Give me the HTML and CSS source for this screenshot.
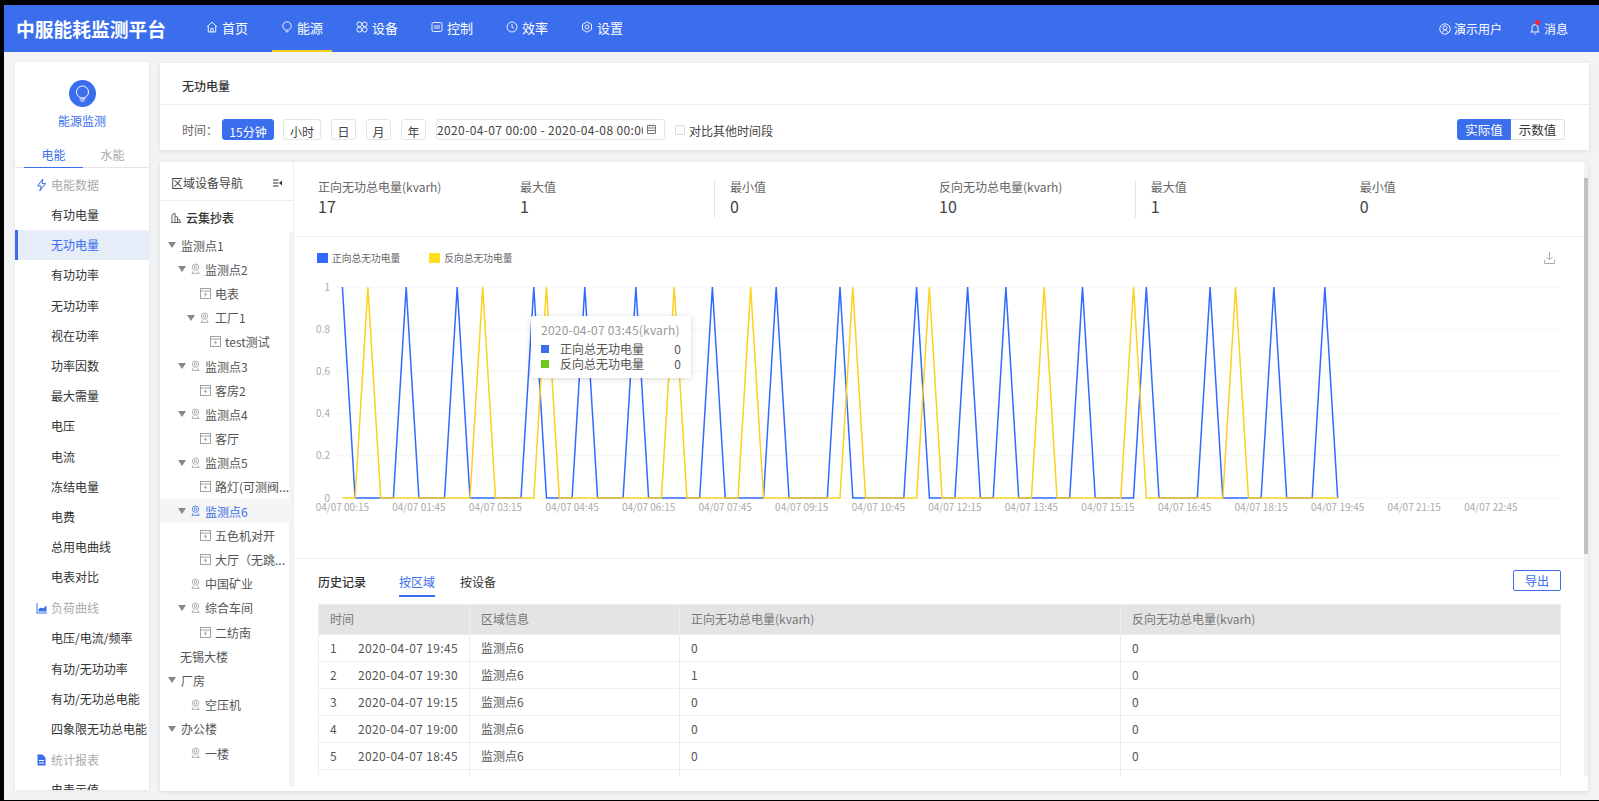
FILE: index.html
```html
<!DOCTYPE html>
<html lang="zh-CN">

<head>
  <meta charset="UTF-8">
  <title>中服能耗监测平台</title>
  <link rel="stylesheet" href="styles.css">
</head>

<body>
  <svg class="defs" xmlns="http://www.w3.org/2000/svg">
    <symbol id="i-home" viewBox="0 0 12 12"><path d="M1 5.8 6 1.200l5 4.600M2.300 5v6h7.400V5M4.800 11V7.600h2.400V11" /></symbol>
    <symbol id="i-bulb" viewBox="0 0 12 12"><circle cx="6" cy="5" r="4.200" /><path d="M4.400 10.800h3.200" /></symbol>
    <symbol id="i-device" viewBox="0 0 12 12"><circle cx="3.300" cy="3.300" r="2.400" /><circle cx="8.700" cy="3.300" r="2.400" /><circle cx="3.300" cy="8.700" r="2.400" /><circle cx="8.700" cy="8.700" r="2.400" /></symbol>
    <symbol id="i-control" viewBox="0 0 12 12"><rect x="1" y="1.500" width="10" height="9" rx="1.500" /><path d="M4 4v4M6 4v4M8 4v4" /></symbol>
    <symbol id="i-clock" viewBox="0 0 12 12"><circle cx="6" cy="6" r="5" /><path d="M6 3v3.200l2 1.200" /></symbol>
    <symbol id="i-gear" viewBox="0 0 12 12"><path d="M6 .8l4.500 2.600v5.200L6 11.200 1.500 8.600V3.400z" /><circle cx="6" cy="6" r="2" /></symbol>
    <symbol id="i-user" viewBox="0 0 12 12"><circle cx="6" cy="6" r="5.200" /><circle cx="6" cy="4.700" r="2" /><path d="M2.800 9.800c.7-1.700 1.900-2.600 3.200-2.600s2.500.9 3.200 2.600" /></symbol>
    <symbol id="i-bell" viewBox="0 0 12 12"><path d="M3 9V4.600a3 3 0 0 1 6 0V9M1.600 9h8.800M5.200 11h1.600" /></symbol>
    <symbol id="i-pin" viewBox="0 0 10 12"><circle cx="5" cy="4" r="3.500" /><circle cx="5" cy="4" r="1.400" /><path d="M2.400 8.400 1 10.800h8L7.600 8.400" /></symbol>
    <symbol id="i-meter" viewBox="0 0 11 11"><rect x=".5" y=".5" width="10" height="10" /><path d="M.5 3h10M6 4.400 4.400 6.400h2.200L5 8.400" /></symbol>
  </svg>

  <div class="app">
    <header class="topbar">
      <div class="logo">中服能耗监测平台</div>
      <nav class="nav">
        <a class="nav-item"><svg class="ico"><use href="#i-home" /></svg>首页</a>
        <a class="nav-item active"><svg class="ico"><use href="#i-bulb" /></svg>能源</a>
        <a class="nav-item"><svg class="ico"><use href="#i-device" /></svg>设备</a>
        <a class="nav-item"><svg class="ico"><use href="#i-control" /></svg>控制</a>
        <a class="nav-item"><svg class="ico"><use href="#i-clock" /></svg>效率</a>
        <a class="nav-item"><svg class="ico"><use href="#i-gear" /></svg>设置</a>
      </nav>
      <div class="top-right">
        <a class="top-link"><svg class="ico"><use href="#i-user" /></svg>演示用户</a>
        <a class="top-link bell"><svg class="ico"><use href="#i-bell" /></svg><i class="dot"></i>消息</a>
      </div>
    </header>

    <div class="content">
      <aside class="sidebar">
        <div class="side-head">
          <div class="side-circle">
            <svg width="15" height="17" viewBox="0 0 15 17" fill="none" stroke="#fff" stroke-width="1">
              <circle cx="7.500" cy="7" r="6" />
              <path d="M4.500 14h6M5.500 16h4" />
            </svg>
          </div>
          <div class="side-title">能源监测</div>
        </div>
        <div class="side-tabs">
          <span class="side-tab active">电能</span>
          <span class="side-tab">水能</span>
        </div>
        <div class="menu">
          <div class="menu-group">
            <svg class="group-ico" viewBox="0 0 11 14" fill="none" stroke="#3a6eed" stroke-width="1"><path d="M6.800 1 1.600 8h3.600L3.800 13 9.600 5.600H6z" /></svg>电能数据
          </div>
          <div class="menu-item">有功电量</div>
          <div class="menu-item active">无功电量</div>
          <div class="menu-item">有功功率</div>
          <div class="menu-item">无功功率</div>
          <div class="menu-item">视在功率</div>
          <div class="menu-item">功率因数</div>
          <div class="menu-item">最大需量</div>
          <div class="menu-item">电压</div>
          <div class="menu-item">电流</div>
          <div class="menu-item">冻结电量</div>
          <div class="menu-item">电费</div>
          <div class="menu-item">总用电曲线</div>
          <div class="menu-item">电表对比</div>
          <div class="menu-group">
            <svg class="group-ico" viewBox="0 0 11 14" fill="#3a6eed"><path d="M.5 2h1v9.500h9.500v1H.5z" /><path d="M2.500 10.500V8l2.500-1.500 2 1L10.500 4.500v6z" /></svg>负荷曲线
          </div>
          <div class="menu-item">电压/电流/频率</div>
          <div class="menu-item">有功/无功功率</div>
          <div class="menu-item">有功/无功总电能</div>
          <div class="menu-item">四象限无功总电能</div>
          <div class="menu-group">
            <svg class="group-ico" viewBox="0 0 11 14" fill="#3a6eed"><path d="M1.500 1.500h5l3 3v8h-8zM3 7v1h5V7zm0 2.500v1h5v-1z" fill-rule="evenodd" /></svg>统计报表
          </div>
          <div class="menu-item">电表示值</div>
        </div>
      </aside>

      <main class="main">
        <section class="card filter-card">
          <div class="filter-title">无功电量</div>
          <div class="filter-row">
            <span class="filter-label">时间：</span>
            <span class="btn primary w52">15分钟</span>
            <span class="btn w38">小时</span>
            <span class="btn w25">日</span>
            <span class="btn w25">月</span>
            <span class="btn w25">年</span>
            <div class="date-input">
              <span class="date-text">2020-04-07 00:00 - 2020-04-08 00:00</span>
              <svg class="date-ico" viewBox="0 0 11 11" fill="none" stroke="#777" stroke-width="1"><path d="M1.500 1.500h8v8h-8zM4 .5v2M7 .5v2M1.500 4h8M1.500 6.500h8" /></svg>
            </div>
            <label class="compare"><i class="check"></i>对比其他时间段</label>
            <div class="toggle">
              <span class="toggle-item on">实际值</span>
              <span class="toggle-item">示数值</span>
            </div>
          </div>
        </section>

        <section class="card lower-card">
          <div class="tree-panel">
            <div class="tree-head">
              <span>区域设备导航</span>
              <svg width="9" height="8" viewBox="0 0 9 8" fill="none" stroke="#333" stroke-width="1"><path d="M0 1h5.500M0 4h5.500M0 7h5.500" /><path d="M9 1.500v5L6 4z" fill="#333" stroke="none" /></svg>
            </div>
            <div class="tree-root">
              <svg width="10" height="11" viewBox="0 0 10 11" fill="none" stroke="#666" stroke-width="1"><path d="M1 10.500V3l3-2v9.500M4 4l2.500 1v5.500M6.500 7 9 8v2.500M0 10.500h10" /></svg>
              云集抄表
            </div>
            <div class="tree">
              <div class="tree-row lv0"><i class="arrow"></i>监测点1</div>
              <div class="tree-row lv1"><i class="arrow"></i><svg class="node"><use href="#i-pin" /></svg>监测点2</div>
              <div class="tree-row lv2"><svg class="node meter"><use href="#i-meter" /></svg>电表</div>
              <div class="tree-row lv2-a"><i class="arrow"></i><svg class="node"><use href="#i-pin" /></svg>工厂1</div>
              <div class="tree-row lv3"><svg class="node meter"><use href="#i-meter" /></svg>test测试</div>
              <div class="tree-row lv1"><i class="arrow"></i><svg class="node"><use href="#i-pin" /></svg>监测点3</div>
              <div class="tree-row lv2"><svg class="node meter"><use href="#i-meter" /></svg>客房2</div>
              <div class="tree-row lv1"><i class="arrow"></i><svg class="node"><use href="#i-pin" /></svg>监测点4</div>
              <div class="tree-row lv2"><svg class="node meter"><use href="#i-meter" /></svg>客厅</div>
              <div class="tree-row lv1"><i class="arrow"></i><svg class="node"><use href="#i-pin" /></svg>监测点5</div>
              <div class="tree-row lv2"><svg class="node meter"><use href="#i-meter" /></svg>路灯(可测阀...</div>
              <div class="tree-row lv1 current"><i class="arrow"></i><svg class="node"><use href="#i-pin" /></svg>监测点6</div>
              <div class="tree-row lv2"><svg class="node meter"><use href="#i-meter" /></svg>五色机对开</div>
              <div class="tree-row lv2"><svg class="node meter"><use href="#i-meter" /></svg>大厅（无跳...</div>
              <div class="tree-row lv1-leaf"><svg class="node"><use href="#i-pin" /></svg>中国矿业</div>
              <div class="tree-row lv1"><i class="arrow"></i><svg class="node"><use href="#i-pin" /></svg>综合车间</div>
              <div class="tree-row lv2"><svg class="node meter"><use href="#i-meter" /></svg>二纺南</div>
              <div class="tree-row lv0-leaf">无锡大楼</div>
              <div class="tree-row lv0"><i class="arrow"></i>厂房</div>
              <div class="tree-row lv1-leaf"><svg class="node"><use href="#i-pin" /></svg>空压机</div>
              <div class="tree-row lv0"><i class="arrow"></i>办公楼</div>
              <div class="tree-row lv1-leaf"><svg class="node"><use href="#i-pin" /></svg>一楼</div>
            </div>
          </div>

          <div class="right-wrap">
            <div class="panel">
              <div class="stats">
                <div class="stat"><p>正向无功总电量(kvarh)</p><b>17</b></div>
                <div class="stat"><p>最大值</p><b>1</b></div>
                <div class="stat sep"><p>最小值</p><b>0</b></div>
                <div class="stat"><p>反向无功总电量(kvarh)</p><b>10</b></div>
                <div class="stat sep"><p>最大值</p><b>1</b></div>
                <div class="stat"><p>最小值</p><b>0</b></div>
              </div>

              <div class="chart">
                <div class="legend-row">
                  <div class="legend">
                    <span class="legend-item"><i class="swatch blue"></i>正向总无功电量</span>
                    <span class="legend-item"><i class="swatch yellow"></i>反向总无功电量</span>
                  </div>
                  <svg width="11" height="12" viewBox="0 0 11 12" fill="none" stroke="#aaa" stroke-width="1"><path d="M5.500 0v8M2.500 5l3 3 3-3M.5 8v3.500h10V8" /></svg>
                </div>
                <svg id="plot" class="plot" viewBox="294 270 1290 288" width="1290" height="288"></svg>
                <div class="tooltip">
                  <div class="tip-title">2020-04-07 03:45(kvarh)</div>
                  <div class="tip-row"><i class="tip-dot tip-blue"></i><span>正向总无功电量</span><em>0</em></div>
                  <div class="tip-row"><i class="tip-dot green"></i><span>反向总无功电量</span><em>0</em></div>
                </div>
              </div>

              <div class="history">
                <div class="history-head">
                  <span class="history-title">历史记录</span>
                  <span class="history-tab active">按区域</span>
                  <span class="history-tab">按设备</span>
                  <span class="export">导出</span>
                </div>
                <table class="records">
                  <thead>
                    <tr><th>时间</th><th>区域信息</th><th>正向无功总电量(kvarh)</th><th>反向无功总电量(kvarh)</th></tr>
                  </thead>
                  <tbody>
                    <tr><td><span class="idx">1</span><span class="when">2020-04-07 19:45</span></td><td>监测点6</td><td>0</td><td>0</td></tr>
                    <tr><td><span class="idx">2</span><span class="when">2020-04-07 19:30</span></td><td>监测点6</td><td>1</td><td>0</td></tr>
                    <tr><td><span class="idx">3</span><span class="when">2020-04-07 19:15</span></td><td>监测点6</td><td>0</td><td>0</td></tr>
                    <tr><td><span class="idx">4</span><span class="when">2020-04-07 19:00</span></td><td>监测点6</td><td>0</td><td>0</td></tr>
                    <tr><td><span class="idx">5</span><span class="when">2020-04-07 18:45</span></td><td>监测点6</td><td>0</td><td>0</td></tr>
                    <tr><td></td><td></td><td></td><td></td></tr>
                  </tbody>
                </table>
              </div>
            </div>
            <div class="scroll-track"><div class="scroll-thumb"></div></div>
          </div>
        </section>
      </main>
    </div>
  </div>
  <script src="chart.js"></script>
</body>

</html>
```

FILE: styles.css
```css
* {
  box-sizing: border-box;
  margin: 0;
  padding: 0;
}

html,
body {
  height: 100%;
  overflow: hidden;
}

body {
  font-family: "Noto Sans CJK SC", "Noto Sans", sans-serif;
  font-size: 12px;
  color: #333;
  background: #000;
  padding: 5px 0 1px 4px;
}

.defs {
  display: none;
}

i,
em {
  font-style: normal;
}

.app {
  height: 795px;
  display: flex;
  flex-direction: column;
  background: #f2f3f5;
}

.ico {
  width: 12px;
  height: 12px;
  fill: none;
  stroke: #fff;
  stroke-width: 0.9;
  flex-shrink: 0;
}

/* Top bar */
.topbar {
  height: 47px;
  flex-shrink: 0;
  display: flex;
  align-items: center;
  padding: 0 31px 0 12px;
  background: #3a6eed;
  color: #fff;
}

.logo {
  width: 150px;
  font-size: 18.75px;
  font-weight: 700;
  white-space: nowrap;
}

.nav {
  display: flex;
  gap: 15px;
  margin-left: 31px;
  height: 100%;
}

.nav-item {
  width: 60px;
  display: flex;
  align-items: center;
  justify-content: center;
  gap: 4px;
  padding-bottom: 1px;
  font-size: 13px;
  border-bottom: 2px solid transparent;
}

.nav-item.active {
  border-bottom-color: #f5cf1b;
}

.top-right {
  margin-left: auto;
  display: flex;
  gap: 27px;
}

.top-link {
  position: relative;
  display: flex;
  align-items: center;
  gap: 3px;
}

.dot {
  position: absolute;
  left: 6px;
  top: 0;
  width: 5px;
  height: 5px;
  border-radius: 50%;
  background: #f5222d;
}

/* Layout */
.content {
  flex: 1;
  min-height: 0;
  display: flex;
  align-items: flex-start;
  padding: 10px 10px 0 11px;
  gap: 11px;
}

.sidebar {
  width: 134px;
  height: 728px;
  overflow: hidden;
  flex-shrink: 0;
  background: #fff;
  box-shadow: 0 1px 4px rgba(0, 0, 0, 0.06);
}

.main {
  flex: 1;
  min-width: 0;
  padding-top: 1px;
}

.card {
  background: #fff;
  box-shadow: 0 1px 4px rgba(0, 0, 0, 0.1);
}

/* Sidebar */
.side-head {
  padding-top: 18px;
  text-align: center;
}

.side-circle {
  width: 27px;
  height: 27px;
  margin: 0 auto;
  border-radius: 50%;
  background: #3a6eed;
  display: flex;
  align-items: center;
  justify-content: center;
}

.side-title {
  margin-top: 5px;
  line-height: 18px;
  color: #3a6eed;
}

.side-tabs {
  display: flex;
  height: 24px;
  margin-top: 14px;
  padding-left: 9px;
  border-bottom: 1px solid #e5e5e5;
}

.side-tab {
  width: 59px;
  text-align: center;
  line-height: 22px;
  color: #aaa;
}

.side-tab.active {
  height: 24px;
  color: #3a6eed;
  border-bottom: 1px solid #3a6eed;
}

.menu {
  padding-top: 1px;
}

.menu-group {
  height: 31px;
  display: flex;
  align-items: center;
  gap: 4px;
  padding-left: 21px;
  color: #aaa;
}

.group-ico {
  width: 11px;
  height: 14px;
  flex-shrink: 0;
}

.menu-item {
  height: 30.2px;
  line-height: 30.2px;
  padding-left: 36px;
  white-space: nowrap;
  color: #333;
}

.menu-item.active {
  padding-left: 33px;
  border-left: 3px solid #3a6eed;
  background: #e6ecf8;
  color: #3a6eed;
}

/* Filter card */
.filter-card {
  height: 87px;
  width: 1429px;
}

.filter-title {
  height: 42px;
  padding: 14px 0 0 22px;
  line-height: 18px;
  font-weight: 500;
  border-bottom: 1px solid #eee;
}

.filter-row {
  display: flex;
  align-items: flex-start;
  gap: 10px;
  padding: 14px 24px 0 22px;
  height: 45px;
}

.filter-label {
  width: 30px;
  line-height: 22px;
  color: #666;
  white-space: nowrap;
}

.btn {
  height: 21px;
  line-height: 23px;
  text-align: center;
  background: #fff;
  border: 1px solid #e5e5e5;
  border-radius: 3px;
  overflow: hidden;
  color: #444;
}

.btn.primary {
  background: #3a6eed;
  border-color: #3a6eed;
  color: #fff;
}

.w52 {
  width: 52px;
}

.w38 {
  width: 38px;
  margin-left: -1px;
}

.w25 {
  width: 25px;
}

.date-input {
  width: 229px;
  height: 21px;
  display: flex;
  align-items: center;
  border: 1px solid #e5e5e5;
  border-radius: 3px;
}

.date-text {
  width: 206px;
  overflow: hidden;
  white-space: nowrap;
  letter-spacing: 0.38px;
  color: #444;
}

.date-ico {
  width: 11px;
  height: 11px;
  margin-left: 3px;
}

.compare {
  display: flex;
  align-items: center;
  gap: 4px;
  height: 22px;
  color: #444;
}

.check {
  width: 10px;
  height: 10px;
  border: 1px solid #ddd;
  border-radius: 1px;
}

.toggle {
  display: flex;
  margin-left: auto;
  height: 21px;
  font-size: 12.5px;
}

.toggle-item {
  width: 54px;
  line-height: 19px;
  text-align: center;
  border: 1px solid #e0e0e0;
  border-left: none;
  border-radius: 0 3px 3px 0;
}

.toggle-item.on {
  background: #3a6eed;
  border: 1px solid #3a6eed;
  border-radius: 3px 0 0 3px;
  color: #fff;
}

/* Lower card */
.lower-card {
  height: 629px;
  width: 1428px;
  margin-top: 12px;
  display: flex;
  align-items: flex-start;
}

.tree-panel {
  width: 134px;
  height: 625px;
  flex-shrink: 0;
  border-right: 1px solid #eee;
}

.tree-head {
  height: 39px;
  display: flex;
  align-items: center;
  justify-content: space-between;
  padding: 3px 11px 0 11px;
  border-bottom: 1px solid #eee;
  color: #444;
}

.tree-root {
  height: 31px;
  display: flex;
  align-items: center;
  gap: 5px;
  padding: 1px 0 0 11px;
  font-weight: 500;
}

.tree {
  height: 555px;
  padding-top: 1px;
  border-right: 4px solid #f3f3f3;
  overflow: hidden;
}

.tree-row {
  height: 24.2px;
  display: flex;
  align-items: center;
  white-space: nowrap;
  color: #555;
}

.lv0 {
  padding-left: 8px;
}

.lv0-leaf {
  padding-left: 20px;
}

.lv1 {
  padding-left: 18px;
}

.lv1-leaf {
  padding-left: 31px;
}

.lv2 {
  padding-left: 40px;
}

.lv2-a {
  padding-left: 27px;
}

.lv2-a .node {
  margin-right: 6px;
}

.lv3 {
  padding-left: 50px;
}

.tree-row.current {
  background: #f5f5f5;
  color: #3a6eed;
}

.arrow {
  width: 0;
  height: 0;
  margin-right: 5px;
  border-left: 4px solid transparent;
  border-right: 4px solid transparent;
  border-top: 6px solid #888;
}

.node {
  width: 9px;
  height: 12px;
  margin-right: 5px;
  fill: none;
  stroke: #999;
  stroke-width: 0.9;
  flex-shrink: 0;
}

.node.meter {
  width: 11px;
  height: 11px;
  margin-right: 4px;
}

.current .node {
  stroke: #3a6eed;
}

.right-wrap {
  flex: 1;
  min-width: 0;
  height: 614px;
  display: flex;
}

.panel {
  width: 1290px;
  height: 614px;
  overflow: hidden;
}

.scroll-track {
  width: 4px;
  background: #f2f2f2;
}

.scroll-thumb {
  height: 376px;
  margin-top: 16px;
  background: #c1c1c1;
}

/* Stats */
.stats {
  height: 75px;
  padding: 18px 0 0 24px;
  display: grid;
  grid-template-columns: 202px 194px 225px 195.7px 225px 1fr;
  border-bottom: 1px solid #eee;
}

.stat {
  height: 38px;
}

.stat p {
  line-height: 14px;
  color: #666;
  white-space: nowrap;
}

.stat b {
  display: block;
  margin-top: 2px;
  line-height: 21px;
  font-size: 16px;
  font-weight: 400;
  color: #444;
}

.stat.sep {
  padding-left: 15px;
  border-left: 1px solid #e5e5e5;
}

/* Chart */
.chart {
  position: relative;
  height: 322px;
  border-bottom: 1px solid #eee;
}

.legend-row {
  display: flex;
  align-items: center;
  justify-content: space-between;
  height: 33px;
  padding: 14px 29px 5px 23px;
}

.legend {
  display: flex;
  gap: 29px;
}

.legend-item {
  display: flex;
  align-items: center;
  gap: 4px;
  font-size: 9.75px;
  color: #666;
  line-height: 14px;
}

.swatch {
  width: 11px;
  height: 10px;
}

.blue {
  background: #2f6bff;
}

.yellow {
  background: #ffe01f;
}

.green {
  background: #6fc71d;
}

.tip-blue {
  background: #3a6eed;
}

.plot {
  display: block;
}

.tooltip {
  position: absolute;
  left: 237px;
  top: 79px;
  width: 160px;
  height: 62px;
  padding: 5px 10px 0 10px;
  background: #fff;
  border-radius: 2px;
  box-shadow: 0 1px 6px rgba(0, 0, 0, 0.16);
}

.tip-title {
  line-height: 17px;
  color: #999;
  white-space: nowrap;
  letter-spacing: 0.22px;
  margin-bottom: 3px;
}

.tip-row {
  display: flex;
  align-items: center;
  height: 15px;
  color: #555;
}

.tip-dot {
  width: 8px;
  height: 8px;
  margin-right: 11px;
}

.tip-row em {
  margin-left: auto;
}

/* History */
.history {
  padding: 0 23px 0 24px;
}

.history-head {
  height: 45px;
  display: flex;
  align-items: flex-start;
}

.history-title {
  width: 81px;
  padding-top: 14px;
  line-height: 18px;
  font-weight: 500;
}

.history-tab {
  height: 38px;
  padding-top: 14px;
  line-height: 18px;
  margin-right: 25px;
  border-bottom: 2px solid transparent;
}

.history-tab.active {
  color: #3a6eed;
  border-bottom-color: #3a6eed;
}

.export {
  width: 48px;
  height: 21px;
  margin: 11px 0 0 auto;
  line-height: 19px;
  text-align: center;
  color: #3a6eed;
  border: 1px solid #3a6eed;
  border-radius: 2px;
}

.records {
  width: 1243px;
  table-layout: fixed;
  border-collapse: collapse;
}

.records th,
.records td {
  text-align: left;
  border: 1px solid #eee;
  padding: 0 0 2px 11px;
}

.records th:nth-child(1) {
  width: 151px;
}

.records th:nth-child(2) {
  width: 210px;
}

.records th:nth-child(3) {
  width: 441px;
}

.records th {
  height: 30px;
  background: #e4e4e4;
  font-weight: 400;
  color: #777;
}

.records td {
  height: 27.1px;
  color: #555;
}

.idx {
  display: inline-block;
  width: 28px;
}

.when {
  letter-spacing: 0.36px;
}
```

FILE: chart.js
```js
// 96 quarter-hour slots, data stops at slot 78
const peaksForward = [0, 5, 9, 15, 19, 23, 29, 34, 39, 45, 49, 52, 58, 63, 68, 73, 77];
const peaksReverse = [2, 11, 16, 26, 32, 40, 46, 55, 62, 70];
const lastSlot = 78;

const plot = document.getElementById("plot");
const gridLeft = 336, gridRight = 1561, gridTop = 287, gridBottom = 498;
const slotW = (gridRight - gridLeft) / 96;
const slotX = i => gridLeft + slotW * (i + 0.5);

function add(tag, attrs, text) {
  const el = document.createElementNS("http://www.w3.org/2000/svg", tag);
  Object.keys(attrs).forEach(k => el.setAttribute(k, attrs[k]));
  if (text) el.textContent = text;
  plot.appendChild(el);
}

// grid and y labels
["0", "0.2", "0.4", "0.6", "0.8", "1"].forEach((label, i) => {
  const y = gridBottom - (gridBottom - gridTop) * i / 5;
  add("line", { x1: gridLeft, x2: gridRight, y1: y, y2: y, stroke: "#f5f5f5", "stroke-width": 1 });
  add("text", { x: 330, y: y + 3.5, "text-anchor": "end", "font-size": 10, fill: "#aaa" }, label);
});

// x labels, every 6 slots
for (let i = 0; i < 96; i += 6) {
  const mins = 15 + i * 15;
  const hh = String(Math.floor(mins / 60)).padStart(2, "0");
  const mm = String(mins % 60).padStart(2, "0");
  add("text", { x: slotX(i), y: 511, "text-anchor": "middle", "font-size": 10, fill: "#aaa" }, "04/07 " + hh + ":" + mm);
}

function drawSeries(peaks, color) {
  const pts = [];
  for (let i = 0; i <= lastSlot; i++) {
    const y = peaks.includes(i) ? gridTop : gridBottom;
    pts.push(slotX(i).toFixed(1) + "," + y);
  }
  add("polyline", { points: pts.join(" "), fill: "none", stroke: color, "stroke-width": 1.5 });
}

drawSeries(peaksForward, "#2f6bff");
drawSeries(peaksReverse, "#fbd21f");
```
